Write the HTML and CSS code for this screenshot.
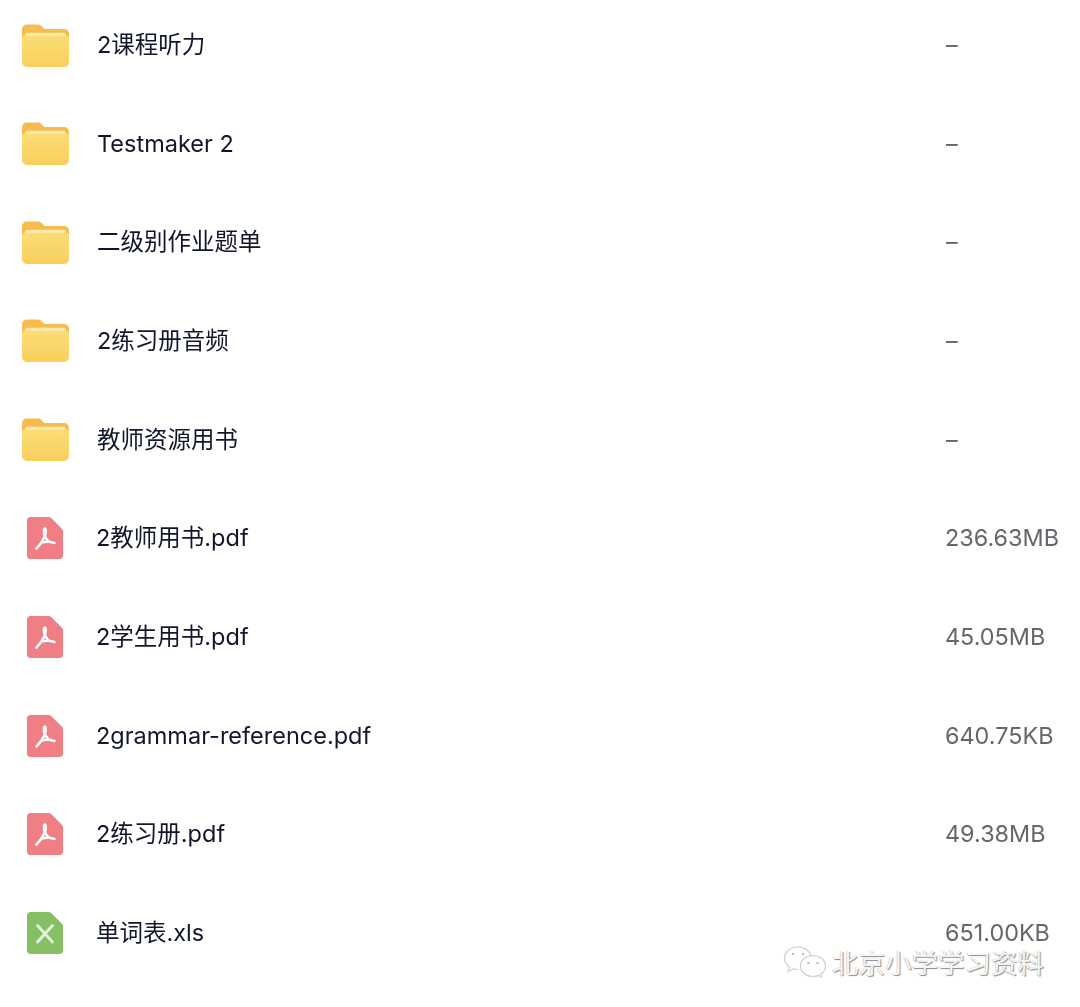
FILE: index.html
```html
<!DOCTYPE html>
<html lang="zh-CN">
<head>
    <meta charset="UTF-8">
    <meta name="viewport" content="width=device-width, initial-scale=1.0">
    <title>文件列表</title>
    <link rel="stylesheet" href="styles.css">
</head>
<body>
    <svg class="defs" width="0" height="0" aria-hidden="true">
        <defs>
            <linearGradient id="folder-front" x1="0" y1="0" x2="0" y2="1">
                <stop offset="0" stop-color="#fadd76"/>
                <stop offset="1" stop-color="#f9cf5c"/>
            </linearGradient>
            <symbol id="icon-folder" viewBox="0 0 48 44">
                <path d="M0 6C0 2.500 2 .5 5 .5h11c2.500 0 3.500 1 5 2.500l2 2h20c3 0 5 2 5 5V20H0z" fill="#f8bc4e"/>
                <path d="M3 12c0-2 1-3 3-3h36c2 0 3 1 3 3v3H3z" fill="#fbeab0"/>
                <path d="M0 15c0-2 1-3 3-3h42c2 0 3 1 3 3v24c0 3-2 5-5 5H5c-3 0-5-2-5-5z" fill="url(#folder-front)"/>
            </symbol>
            <symbol id="icon-pdf" viewBox="0 0 36 42">
                <path d="M3.500 0H21.500c1 0 2 .4 2.700 1.100L34.900 11.800c.7.700 1.100 1.700 1.100 2.700v24c0 2-1.500 3.500-3.500 3.500h-29C1.500 42 0 40.500 0 38.500v-35C0 1.500 1.500 0 3.500 0z" fill="#f07e85"/>
                <path d="M17.800 19.500L14.500 25.500l7-1zM17.800 19.500C16.500 15 16.800 11.500 17.800 11.500s1.200 3.500 0 8M14.500 25.500L9.500 31.500M21.500 24.500L27.500 26" fill="none" stroke="#fff" stroke-width="2.600" stroke-linecap="round" stroke-linejoin="round"/>
            </symbol>
            <symbol id="icon-xls" viewBox="0 0 36 42">
                <path d="M3.500 0H21.500c1 0 2 .4 2.700 1.100L34.900 11.800c.7.700 1.100 1.700 1.100 2.700v24c0 2-1.500 3.500-3.500 3.500h-29C1.500 42 0 40.500 0 38.500v-35C0 1.500 1.500 0 3.500 0z" fill="#85c164"/>
                <path d="M10.500 13.500l15 16.500M25.500 13.500l-15 16.500" fill="none" stroke="#e6f3dc" stroke-width="2.800" stroke-linecap="round"/>
            </symbol>
        </defs>
    </svg>

    <div class="file-list">
        <div class="file-row">
            <svg class="icon-folder"><use href="#icon-folder"/></svg>
            <span class="file-name">2课程听力</span>
            <span class="file-size">–</span>
        </div>
        <div class="file-row">
            <svg class="icon-folder"><use href="#icon-folder"/></svg>
            <span class="file-name">Testmaker 2</span>
            <span class="file-size">–</span>
        </div>
        <div class="file-row">
            <svg class="icon-folder"><use href="#icon-folder"/></svg>
            <span class="file-name">二级别作业题单</span>
            <span class="file-size">–</span>
        </div>
        <div class="file-row">
            <svg class="icon-folder"><use href="#icon-folder"/></svg>
            <span class="file-name">2练习册音频</span>
            <span class="file-size">–</span>
        </div>
        <div class="file-row">
            <svg class="icon-folder"><use href="#icon-folder"/></svg>
            <span class="file-name">教师资源用书</span>
            <span class="file-size">–</span>
        </div>
        <div class="file-row">
            <svg class="icon-doc"><use href="#icon-pdf"/></svg>
            <span class="file-name">2教师用书.pdf</span>
            <span class="file-size">236.63MB</span>
        </div>
        <div class="file-row">
            <svg class="icon-doc"><use href="#icon-pdf"/></svg>
            <span class="file-name">2学生用书.pdf</span>
            <span class="file-size">45.05MB</span>
        </div>
        <div class="file-row">
            <svg class="icon-doc"><use href="#icon-pdf"/></svg>
            <span class="file-name">2grammar-reference.pdf</span>
            <span class="file-size">640.75KB</span>
        </div>
        <div class="file-row">
            <svg class="icon-doc"><use href="#icon-pdf"/></svg>
            <span class="file-name">2练习册.pdf</span>
            <span class="file-size">49.38MB</span>
        </div>
        <div class="file-row">
            <svg class="icon-doc"><use href="#icon-xls"/></svg>
            <span class="file-name">单词表.xls</span>
            <span class="file-size">651.00KB</span>
        </div>
    </div>

    <!-- watermark sits over the last row -->
    <div class="watermark">
        <svg class="wm-logo" viewBox="0 0 44 32">
            <path d="M15 1C7.500 1 1.500 6 1.500 12.500c0 3.500 2 6.500 5 8.700L5 25.500l5.200-2.600c1.500.5 3 .7 4.800.7M29 12c-1.500-6.500-7-11-14-11" fill="none" stroke="#cfcfcf" stroke-width="1.200"/>
            <ellipse cx="30" cy="20" rx="12.500" ry="10.500" fill="#fff" stroke="#cfcfcf" stroke-width="1.200"/>
            <path d="M35 29l3.500 2-.8-4" fill="#fff" stroke="#cfcfcf" stroke-width="1.200"/>
            <circle cx="10" cy="8" r="1.300" fill="#c4c4c4"/>
            <circle cx="20" cy="8" r="1.300" fill="#c4c4c4"/>
            <circle cx="25.500" cy="17" r="1.300" fill="#c4c4c4"/>
            <circle cx="34.500" cy="17" r="1.300" fill="#c4c4c4"/>
        </svg>
        <span class="wm-text">北京小学学习资料</span>
    </div>
</body>
</html>
```

FILE: styles.css
```css
body {
    margin: 0;
    background-color: #fff;
    font-family: Inter, "Noto Sans CJK SC", sans-serif;
}
.defs {
    position: absolute;
}
/* the source is a slightly soft screenshot */
.file-list {
    display: flex;
    flex-direction: column;
    gap: 48.67px;
    padding: 20px 0 0 22px;
    filter: blur(0.4px);
}
.file-row {
    display: flex;
    align-items: center;
    height: 50px;
}
.icon-folder {
    width: 47px;
    height: 43px;
    margin-right: 28px;
}
.icon-doc {
    width: 36px;
    height: 42px;
    margin: 0 33px 0 5px;
}
.file-name {
    width: 849px;
    font-size: 23.5px;
    line-height: 30px;
    color: #12162c;
}
.file-size {
    font-size: 23.4px;
    line-height: 30px;
    color: #65676d;
    white-space: nowrap;
}
.watermark {
    position: absolute;
    left: 783px;
    top: 942px;
    display: flex;
    align-items: center;
    gap: 5px;
}
.wm-logo {
    width: 44px;
    height: 32px;
}
.wm-text {
    font-size: 26.5px;
    color: #f6f6f6;
    text-shadow: 1px 1px 1px #8c8c8c, -0.5px -0.5px 0 #c4c4c4;
    white-space: nowrap;
}
```
